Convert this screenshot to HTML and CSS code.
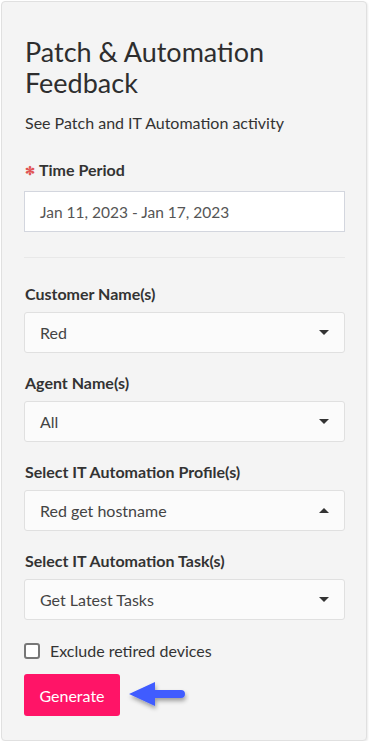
FILE: index.html
```html
<!DOCTYPE html>
<html>
<head>
<meta charset="utf-8">
<link rel="stylesheet" href="styles.css">
</head>
<body>
<div class="panel">
  <h1 class="title">Patch &amp; Automation Feedback</h1>
  <p class="subtitle">See Patch and IT Automation activity</p>

  <div class="field">
    <label class="label"><span class="req">&#x273B;</span>Time Period</label>
    <div class="input">Jan 11, 2023 - Jan 17, 2023</div>
  </div>

  <hr class="sep">

  <div class="field">
    <label class="label">Customer Name(s)</label>
    <div class="select"><span>Red</span><span class="caret down"></span></div>
  </div>
  <div class="field">
    <label class="label">Agent Name(s)</label>
    <div class="select"><span>All</span><span class="caret down"></span></div>
  </div>
  <div class="field">
    <label class="label">Select IT Automation Profile(s)</label>
    <div class="select"><span>Red get hostname</span><span class="caret up"></span></div>
  </div>
  <div class="field">
    <label class="label">Select IT Automation Task(s)</label>
    <div class="select"><span>Get Latest Tasks</span><span class="caret down"></span></div>
  </div>

  <label class="check"><span class="box"></span>Exclude retired devices</label>

  <div class="actions">
    <button class="btn">Generate</button>
    <svg class="arrow" width="64" height="36" viewBox="0 0 64 36">
      <defs>
        <filter id="sh" x="-20%" y="-20%" width="140%" height="160%">
          <feDropShadow dx="1" dy="3" stdDeviation="2" flood-color="#000" flood-opacity="0.35"/>
        </filter>
      </defs>
      <g filter="url(#sh)">
        <path d="M4 16 L30 4 L30 12 L56 12 A4 4 0 0 1 56 20 L30 20 L30 28 Z" fill="#3f5cff"/>
      </g>
    </svg>
  </div>
</div>
</body>
</html>
```
FILE: styles.css
```css
html, body {
  margin: 0;
  padding: 0;
  background: #ffffff;
}
body {
  font-family: "Lato", "Open Sans", sans-serif;
  color: #333333;
}
.panel {
  box-sizing: border-box;
  width: 366px;
  height: 740px;
  margin: 1px 0 0 1px;
  background: #f4f4f4;
  border: 1px solid #e0e0e0;
  border-radius: 4px;
  padding: 34px 21px 0 22px;
  box-shadow: 1px 1px 2px rgba(0,0,0,0.08);
}
.title {
  margin: 0 0 0 1px;
  font-size: 27px;
  font-weight: 400;
  line-height: 31px;
  color: #2e2e2e;
}
.subtitle {
  margin: 15px 0 0 1px;
  font-size: 16px;
  line-height: 20px;
  color: #333333;
}
.label {
  display: block;
  font-size: 16px;
  font-weight: 700;
  line-height: 20px;
  color: #333333;
  padding-left: 1px;
}
.field:first-of-type .label { margin-top: 27px; }
.req {
  color: #e05555;
  font-size: 12px;
  margin-right: 4px;
  position: relative;
  top: -1px;
}
.input {
  box-sizing: border-box;
  margin-top: 9px;
  height: 41px;
  background: #ffffff;
  border: 1px solid #d3d6de;
  padding: 0 15px;
  display: flex;
  align-items: center;
  font-size: 15.5px;
  color: #555555;
}
.sep {
  margin: 25px 0 0 0;
  border: 0;
  border-top: 1px solid #e8e8e8;
  height: 0;
}
.sep + .field .label { margin-top: 26px; }
.field + .field .label { margin-top: 20px; }
.select {
  box-sizing: border-box;
  margin-top: 8px;
  height: 41px;
  background: #fbfbfb;
  border: 1px solid #e0e0e0;
  border-radius: 3px;
  padding: 0 15px 0 15px;
  display: flex;
  align-items: center;
  justify-content: space-between;
  font-size: 16px;
  color: #444444;
}
.caret {
  width: 0;
  height: 0;
  border-left: 5px solid transparent;
  border-right: 5px solid transparent;
}
.caret.down { border-top: 5px solid #333333; }
.caret.up { border-bottom: 5px solid #333333; }
.check {
  display: flex;
  align-items: center;
  margin-top: 21px;
  font-size: 16px;
  color: #333333;
  line-height: 20px;
}
.box {
  box-sizing: border-box;
  width: 16px;
  height: 16px;
  border: 2px solid #777777;
  border-radius: 3px;
  background: #ffffff;
  margin-right: 10px;
}
.actions {
  display: flex;
  align-items: center;
  margin-top: 13px;
}
.btn {
  width: 96px;
  height: 42px;
  background: #ff1467;
  color: #ffffff;
  border: 0;
  border-radius: 3px;
  font-family: inherit;
  font-size: 16px;
  padding: 0;
}
.arrow {
  margin-left: 5px;
  margin-top: 2px;
}
```
